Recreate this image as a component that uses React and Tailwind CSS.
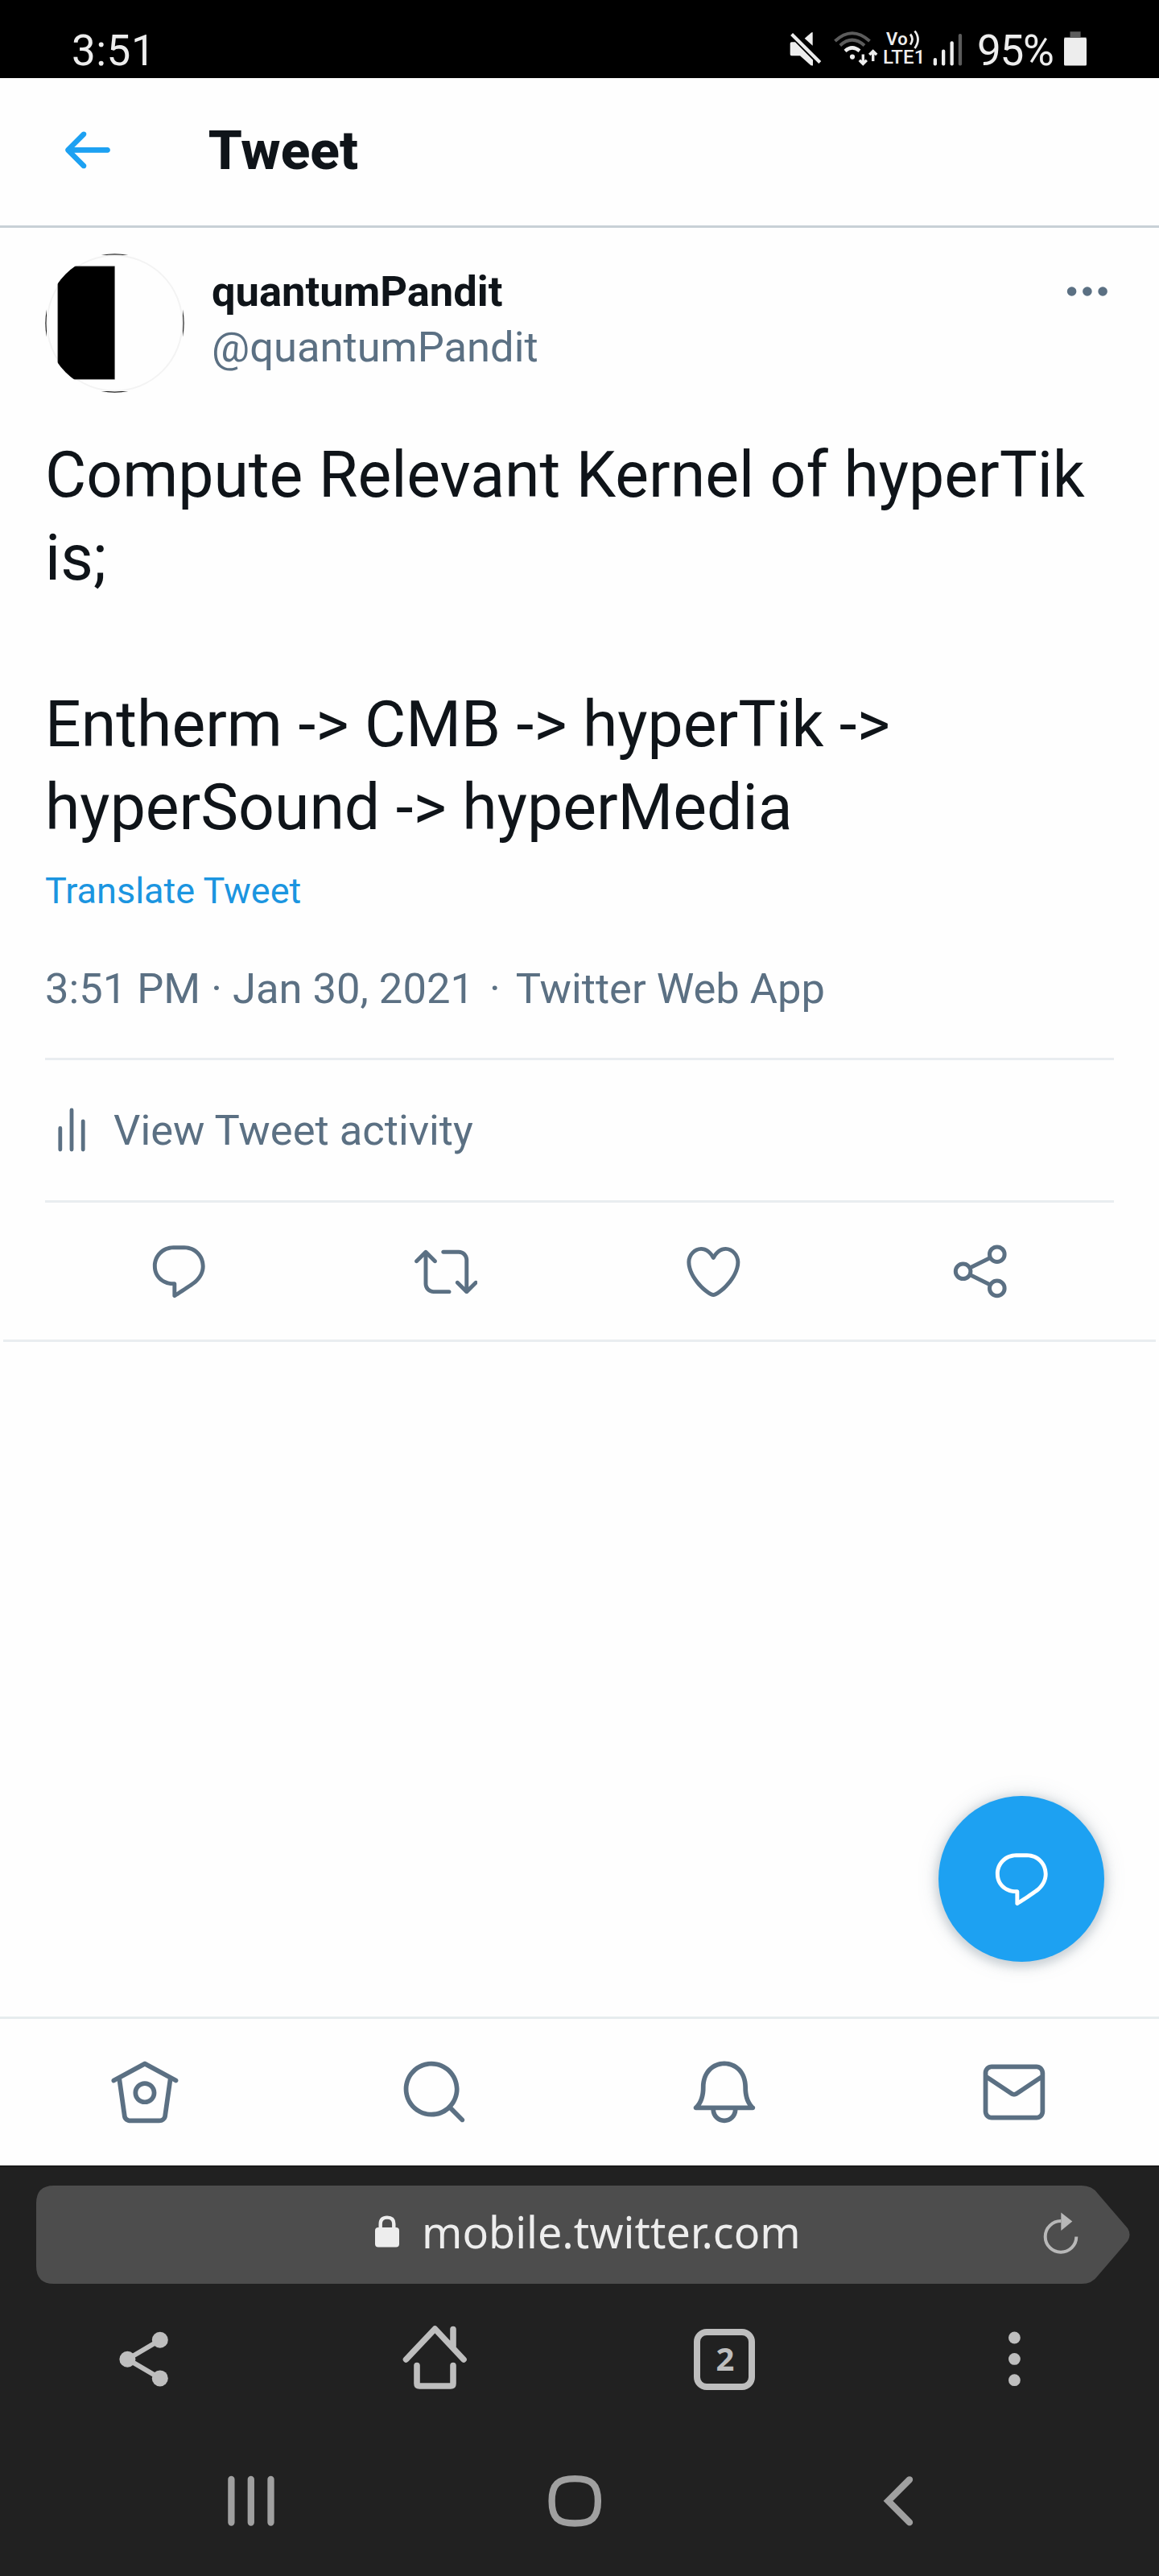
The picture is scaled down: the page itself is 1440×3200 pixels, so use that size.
const Glyph = ({ d, className }) => (
  <svg viewBox="0 0 24 24" className={className} fill="currentColor">
    {d.map((p, i) => (
      <path key={i} d={p} />
    ))}
  </svg>
);

const BACK = [
  'M20 11H7.414l4.293-4.293c.39-.39.39-1.023 0-1.414s-1.023-.39-1.414 0l-6 6c-.39.39-.39 1.023 0 1.414l6 6c.195.195.45.293.707.293s.512-.098.707-.293c.39-.39.39-1.023 0-1.414L7.414 13H20c.553 0 1-.447 1-1s-.447-1-1-1z',
];
const REPLY = [
  'M14.046 2.242l-4.148-.01h-.002c-4.374 0-7.8 3.427-7.8 7.802 0 4.098 3.186 7.206 7.465 7.37v3.828c0 .108.044.286.12.403.142.225.384.347.632.347.138 0 .277-.038.402-.118.264-.168 6.473-4.14 8.088-5.506 1.902-1.61 3.04-3.97 3.043-6.312v-.017c-.006-4.367-3.43-7.787-7.8-7.788zm3.787 12.972c-1.134.96-4.862 3.405-6.772 4.643V16.67c0-.414-.335-.75-.75-.75h-.396c-3.66 0-6.318-2.476-6.318-5.886 0-3.534 2.768-6.302 6.3-6.302l4.147.01h.002c3.532 0 6.3 2.766 6.302 6.296-.003 1.91-.942 3.844-2.514 5.176z',
];
const RETWEET = [
  'M23.77 15.67c-.292-.293-.767-.293-1.06 0l-2.22 2.22V7.65c0-2.068-1.683-3.75-3.75-3.75h-5.85c-.414 0-.75.336-.75.75s.336.75.75.75h5.85c1.24 0 2.25 1.01 2.25 2.25v10.24l-2.22-2.22c-.293-.293-.768-.293-1.06 0s-.294.768 0 1.06l3.5 3.5c.145.147.337.22.53.22s.383-.072.53-.22l3.5-3.5c.294-.292.294-.767 0-1.06zm-10.66 3.28H7.26c-1.24 0-2.25-1.01-2.25-2.25V6.46l2.22 2.22c.148.147.34.22.532.22s.384-.073.53-.22c.293-.293.293-.768 0-1.06l-3.5-3.5c-.293-.294-.768-.294-1.06 0l-3.5 3.5c-.294.292-.294.767 0 1.06s.767.293 1.06 0l2.22-2.22V16.7c0 2.068 1.683 3.75 3.75 3.75h5.85c.414 0 .75-.336.75-.75s-.337-.75-.75-.75z',
];
const HEART = [
  'M12 21.638h-.014C9.403 21.59 1.95 14.856 1.95 8.478c0-3.064 2.525-5.754 5.403-5.754 2.29 0 3.83 1.58 4.646 2.73.814-1.148 2.354-2.73 4.645-2.73 2.88 0 5.404 2.69 5.404 5.755 0 6.376-7.454 13.11-10.037 13.157H12zM7.354 4.225c-2.08 0-3.903 1.988-3.903 4.255 0 5.74 7.034 11.596 8.55 11.658 1.518-.062 8.55-5.917 8.55-11.658 0-2.267-1.823-4.255-3.903-4.255-2.528 0-3.94 2.936-3.952 2.965-.23.562-1.156.562-1.387 0-.014-.03-1.425-2.965-3.954-2.965z',
];
const HOME = [
  'M22.46 7.57L12.357 2.115c-.223-.12-.49-.12-.713 0L1.543 7.57c-.364.197-.5.652-.303 1.017.135.25.394.393.66.393.12 0 .243-.03.356-.09l.815-.44L4.7 19.963c.214 1.215 1.308 2.062 2.658 2.062h9.282c1.352 0 2.445-.848 2.663-2.087l1.626-11.49.818.442c.364.193.82.06 1.017-.304.196-.363.06-.818-.304-1.016zm-4.638 12.133c-.107.606-.703.822-1.18.822H7.36c-.48 0-1.075-.216-1.178-.798L4.48 7.69 12 3.628l7.522 4.06-1.7 12.015z',
  'M8.22 12.184c0 2.084 1.695 3.78 3.78 3.78s3.78-1.696 3.78-3.78-1.695-3.78-3.78-3.78-3.78 1.696-3.78 3.78zm6.06 0c0 1.258-1.022 2.28-2.28 2.28s-2.28-1.022-2.28-2.28 1.022-2.28 2.28-2.28 2.28 1.022 2.28 2.28z',
];
const SEARCH = [
  'M21.53 20.47l-3.66-3.66C19.195 15.24 20 13.214 20 11c0-4.97-4.03-9-9-9s-9 4.03-9 9 4.03 9 9 9c2.215 0 4.24-.804 5.808-2.13l3.66 3.66c.147.146.34.22.53.22s.385-.073.53-.22c.295-.293.295-.767.002-1.06zM3.5 11c0-4.135 3.365-7.5 7.5-7.5s7.5 3.365 7.5 7.5-3.365 7.5-7.5 7.5-7.5-3.365-7.5-7.5z',
];
const BELL = [
  'M21.697 16.468c-.02-.016-2.14-1.64-2.103-6.03.02-2.532-.812-4.782-2.347-6.335C15.872 2.71 14.01 1.94 12.005 1.93h-.013c-2.004.01-3.866.78-5.242 2.174-1.534 1.553-2.368 3.802-2.346 6.334.037 4.33-2.02 5.967-2.102 6.03-.26.193-.366.53-.265.838.102.308.39.515.712.515h4.92c.102 2.31 1.997 4.16 4.33 4.16s4.226-1.85 4.327-4.16h4.922c.322 0 .61-.206.71-.514.103-.307-.003-.645-.263-.838zM12 20.478c-1.505 0-2.73-1.177-2.828-2.658h5.656c-.1 1.48-1.323 2.66-2.828 2.66zM4.38 16.32c.74-1.132 1.548-3.028 1.524-5.896-.018-2.16.644-3.982 1.913-5.267C8.91 4.05 10.397 3.437 12 3.43c1.603.008 3.087.62 4.18 1.728 1.27 1.285 1.933 3.106 1.915 5.267-.024 2.868.785 4.765 1.525 5.896H4.38z',
];
const MAIL = [
  'M19.25 3.018H4.75C3.233 3.018 2 4.252 2 5.77v12.495c0 1.518 1.233 2.753 2.75 2.753h14.5c1.517 0 2.75-1.235 2.75-2.753V5.77c0-1.518-1.233-2.752-2.75-2.752zm-14.5 1.5h14.5c.69 0 1.25.56 1.25 1.25v.714l-8.05 5.367c-.273.18-.626.182-.9-.002L3.5 6.482v-.714c0-.69.56-1.25 1.25-1.25zm14.5 14.998H4.75c-.69 0-1.25-.56-1.25-1.25V8.24l7.24 4.83c.383.256.822.384 1.26.384.44 0 .877-.128 1.26-.383l7.24-4.83v10.022c0 .69-.56 1.25-1.25 1.25z',
];

function StatusBar() {
  return (
    <div className="flex h-[97px] shrink-0 items-start bg-black pl-[89px] pr-[90px] pt-[33px] text-[#ededed]">
      <span className="text-[53px] leading-[60px] tracking-[0.5px]">3:51</span>
      <div className="ml-auto flex items-start">
        <svg className="mt-[5px] h-[45px] w-[42px]" viewBox="0 0 42 45">
          <path
            fill="#ededed"
            d="M3.5 14.3H8L30 36.5V43.6L27.5 43.2 14 31.3H3.5Q1.7 31.3 1.7 29.5V16Q1.7 14.3 3.5 14.3ZM29.7 2.6V18.8L19.7 9.7 28 2.6Q29.7 1.4 29.7 2.6Z"
          />
          <path d="M3.6 4.6 38.8 39.6" stroke="#ededed" strokeWidth="4.2" />
        </svg>
        <svg className="ml-[13px] mt-[5px] h-[45px] w-[56px]" viewBox="0 0 56 45" fill="none">
          <path d="M2.5 13Q23.6 -6.5 45.5 13" stroke="#5c5c5c" strokeWidth="4" />
          <path d="M8.8 18.5Q23.6 4.8 39 18.5" stroke="#5c5c5c" strokeWidth="4" />
          <path d="M15 25.3Q23.8 17.5 33 25.3" stroke="#ededed" strokeWidth="4.4" />
          <circle cx="24" cy="32.6" r="3.1" fill="#ededed" />
          <path d="M37.3 29.5V41M32.8 36.8 37.3 41.4 41.8 36.8" stroke="#ededed" strokeWidth="3.4" />
          <path d="M49.7 38V26M45.2 30 49.7 25.6 54.2 30" stroke="#ededed" strokeWidth="3.4" />
        </svg>
        <div className="ml-[6px] mt-[4px] flex w-[53px] flex-col">
          <div className="flex h-[22px] items-start pl-[4px]">
            <span className="text-[22px] font-semibold leading-[23px] tracking-[0.4px]">Vo</span>
            <svg className="ml-px h-[24px] w-[16px]" viewBox="0 0 16 24" fill="none" stroke="#ededed" strokeWidth="2.8">
              <path d="M2 5.500Q7 11.500 2 18.500M7.500 1.500Q15.500 11.500 7.500 23" />
            </svg>
          </div>
          <span className="text-[24px] font-medium leading-[24px] tracking-[0.2px]">LTE1</span>
        </div>
        <svg className="ml-[9px] mt-[8px] h-[42px] w-[38px]" viewBox="0 0 38 42">
          <rect x="0.7" y="31" width="4.3" height="9.5" rx="2" fill="#ededed" />
          <rect x="11" y="20.6" width="4.3" height="19.9" rx="2" fill="#ededed" />
          <rect x="21.5" y="10.3" width="4.3" height="30.2" rx="2" fill="#ededed" />
          <rect x="31.8" y="1" width="4.3" height="39.5" rx="2" fill="#5c5c5c" />
        </svg>
        <span className="ml-[17px] w-[108px] whitespace-nowrap text-[53px] leading-[60px] tracking-[-1.3px]">95%</span>
        <svg className="mt-[5px] h-[45px] w-[28px]" viewBox="0 0 28 45">
          <path d="M7.5 8V1.3H20.6V8H27Q28 8 28 10H0Q0 8 1 8Z" fill="#5c5c5c" />
          <rect y="9" width="28" height="34.6" rx="1.5" fill="#ededed" />
        </svg>
      </div>
    </div>
  );
}

function Avatar() {
  return (
    <svg className="h-[173px] w-[173px] shrink-0" viewBox="0 0 173 173">
      <defs>
        <clipPath id="avatarClip">
          <circle cx="86.5" cy="86.5" r="86.2" />
        </clipPath>
      </defs>
      <g clipPath="url(#avatarClip)">
        <rect x="0.8" y="0.8" width="171.4" height="171.4" fill="#fefefe" stroke="#222" strokeWidth="2.4" />
        <circle cx="86.5" cy="86.5" r="84" fill="none" stroke="#f3f3f3" strokeWidth="2" />
        <rect x="15.8" y="15.8" width="70.8" height="140.4" fill="#000" stroke="#777" strokeWidth="0.6" />
      </g>
    </svg>
  );
}

function ActionRow() {
  return (
    <div className="grid h-[170px] grid-cols-4 place-items-center text-[#5b7083]">
      <Glyph d={REPLY} className="h-[78.75px] w-[78.75px]" />
      <Glyph d={RETWEET} className="h-[78.75px] w-[78.75px]" />
      <Glyph d={HEART} className="h-[78.75px] w-[78.75px]" />
      <svg className="h-[80px] w-[80px]" viewBox="0 0 80 80" fill="none" stroke="currentColor" strokeWidth="5">
        <circle cx="18.6" cy="40.3" r="9.3" />
        <circle cx="60.8" cy="19.2" r="9.3" />
        <circle cx="60.8" cy="61.4" r="9.3" />
        <path d="M27 36 52.3 23.6M27 44.6 52.3 57" />
      </svg>
    </div>
  );
}

function Tweet() {
  return (
    <article className="mx-[4px] border-b-[3px] border-[#e9edf0] px-[52px] pt-[32px]">
      <div className="flex">
        <Avatar />
        <div className="ml-[34px] mt-[13px] flex flex-col text-[52.5px] leading-[69px]">
          <span className="font-bold text-[#0f1419]">quantumPandit</span>
          <span className="text-[#5b7083]">@quantumPandit</span>
        </div>
        <svg className="ml-auto mr-[6px] mt-[37px] h-[20px] w-[58px]" viewBox="0 0 58 20" fill="#5b7083">
          <circle cx="11.6" cy="10" r="5.8" />
          <circle cx="30.9" cy="10" r="5.8" />
          <circle cx="50.1" cy="10" r="5.8" />
        </svg>
      </div>
      <p className="mt-[51px] whitespace-pre text-[78.75px] leading-[103.2px] text-[#0f1419]">
        {'Compute Relevant Kernel of hyperTik\nis;\n\nEntherm -> CMB -> hyperTik ->\nhyperSound -> hyperMedia'}
      </p>
      <div className="mt-[22px] text-[45px] leading-[60px] text-[#1b95e0]">Translate Tweet</div>
      <div className="mt-[57px] flex text-[52.5px] leading-[69px] text-[#5b7083]">
        <span>3:51 PM · Jan 30, 2021</span>
        <span className="mx-[19px]">·</span>
        <span>Twitter Web App</span>
      </div>
      <div className="mt-[51px] flex h-[180px] items-center border-y-[3px] border-[#e9edf0] text-[#5b7083]">
        <svg
          className="ml-[14px] h-[60px] w-[40px]"
          viewBox="0 0 40 60"
          stroke="currentColor"
          strokeWidth="4.8"
          strokeLinecap="round"
        >
          <path d="M4.8 27.5V54M19 5V54M33.2 18.8V54" />
        </svg>
        <span className="ml-[31px] text-[52.5px] leading-[69px]">View Tweet activity</span>
      </div>
      <ActionRow />
    </article>
  );
}

function TabBar() {
  return (
    <nav className="grid h-[185px] shrink-0 grid-cols-4 place-items-center border-t-[3px] border-[#e6ecee] bg-[#fefefe] text-[#5b7083]">
      {[HOME, SEARCH, BELL, MAIL].map((d, i) => (
        <Glyph key={i} d={d} className="h-[91.9px] w-[91.9px]" />
      ))}
    </nav>
  );
}

function BrowserBar() {
  return (
    <div className="flex h-[510px] shrink-0 flex-col border-t-2 border-[#1a1a1a] bg-[#212121]">
      <div className="relative ml-[45px] mt-[23px] flex h-[122px] w-[1360px] items-center">
        <svg className="absolute inset-0 h-[122px] w-[1360px]" viewBox="0 0 1360 122">
          <path
            fill="#4d4d4d"
            d="M22 0H1299Q1312 0 1319 10L1356 53Q1361 61 1356 69L1319 112Q1312 122 1299 122H22Q0 122 0 100V22Q0 0 22 0Z"
          />
        </svg>
        <svg className="relative mb-[9px] ml-[421px] h-[40px] w-[30px]" viewBox="0 0 30 40">
          <path d="M6.7 18V10.5Q6.7 2.6 15 2.6T23.3 10.5V18" fill="none" stroke="#ededed" strokeWidth="4.4" />
          <rect y="15" width="30" height="24.5" rx="4" fill="#ededed" />
        </svg>
        <span className="relative mb-[8px] ml-[28px] font-['Noto_Sans',sans-serif] text-[53.9px] leading-[70px] text-[#ededed]">
          mobile.twitter.com
        </span>
        <svg className="absolute right-[62px] top-[30px] h-[60px] w-[50px]" viewBox="0 0 50 60">
          <path d="M44.3 33.4A19.3 19.3 0 1 1 25.3 14.1" fill="none" stroke="#b8b8b8" strokeWidth="4" />
          <path d="M25.3 3.5 39.3 14.5 25.3 26Z" fill="#b8b8b8" />
        </svg>
      </div>
      <div className="mt-[44px] grid h-[100px] grid-cols-4 place-items-center">
        <svg className="h-[100px] w-[100px]" viewBox="0 0 100 100" fill="#bebebe">
          <path d="M68.8 25.8 28.4 49.7 68.8 73.4" fill="none" stroke="#bebebe" strokeWidth="6" />
          <circle cx="28.4" cy="49.7" r="10" />
          <circle cx="68.8" cy="25.8" r="10" />
          <circle cx="68.8" cy="73.4" r="10" />
        </svg>
        <svg
          className="h-[100px] w-[100px]"
          viewBox="0 0 100 100"
          fill="none"
          stroke="#bebebe"
          strokeWidth="7.6"
          strokeLinecap="round"
          strokeLinejoin="round"
        >
          <path d="M14.5 50 50.4 12 86 50M73 12.500V34M28 57.500V80Q28 83 31 83H70Q73 83 73 80V57.500" />
        </svg>
        <div className="flex h-[76px] w-[76px] items-center justify-center rounded-[16px] border-[8px] border-[#bebebe] font-['Noto_Sans',sans-serif] text-[40px] font-bold leading-[56px] text-[#bebebe]">
          <span className="mb-[3px] ml-[2px]">2</span>
        </div>
        <svg className="h-[100px] w-[100px]" viewBox="0 0 100 100" fill="#bebebe">
          <circle cx="50.4" cy="23" r="7.4" />
          <circle cx="50.4" cy="49.4" r="7.4" />
          <circle cx="50.4" cy="75.7" r="7.4" />
        </svg>
      </div>
      <div className="mt-[92px] flex h-[70px] items-center pl-[277px]">
        <svg className="h-[70px] w-[70px]" viewBox="0 0 70 70" stroke="#a0a0a0" strokeWidth="8.3" strokeLinecap="round">
          <path d="M10.4 7V60.500M34.800 7V60.500M59.500 7V60.500" />
        </svg>
        <svg className="ml-[332px] h-[70px] w-[70px]" viewBox="0 0 70 70" fill="none" stroke="#a0a0a0" strokeWidth="8.3">
          <path d="M6.6 33.8C6.600 13 14 6.200 35.200 6.200S63.900 13 63.900 33.800 56.400 61.500 35.200 61.500 6.600 54.700 6.600 33.800Z" />
        </svg>
        <svg
          className="ml-[332px] h-[70px] w-[70px]"
          viewBox="0 0 70 70"
          fill="none"
          stroke="#a0a0a0"
          strokeWidth="8.3"
          strokeLinecap="round"
        >
          <path d="M49 7.300 22.500 33.800 49 60.400" />
        </svg>
      </div>
    </div>
  );
}

export default function App() {
  return (
    <div className="flex h-[3200px] w-[1440px] flex-col overflow-hidden bg-[#fefefe] font-['Roboto',sans-serif]">
      <StatusBar />
      <header className="flex h-[186px] shrink-0 items-center border-b-[3px] border-[#c8d0d6] pb-[4px] pl-[68px]">
        <Glyph d={BACK} className="h-[78.75px] w-[78.75px] text-[#1da1f2]" />
        <h1 className="ml-[112px] text-[67.500px] font-extrabold leading-[87px] text-[#0f1419]">Tweet</h1>
      </header>
      <main className="flex flex-1 flex-col">
        <Tweet />
        <button className="mb-[68px] ml-auto mr-[68px] mt-auto flex h-[206px] w-[206px] items-center justify-center rounded-full bg-[#1da1f2] text-white shadow-[0_0_28px_rgba(101,119,134,0.2),0_3.5px_10.5px_3.5px_rgba(101,119,134,0.25)]">
          <Glyph d={REPLY} className="h-[78.75px] w-[78.75px]" />
        </button>
      </main>
      <TabBar />
      <BrowserBar />
    </div>
  );
}
